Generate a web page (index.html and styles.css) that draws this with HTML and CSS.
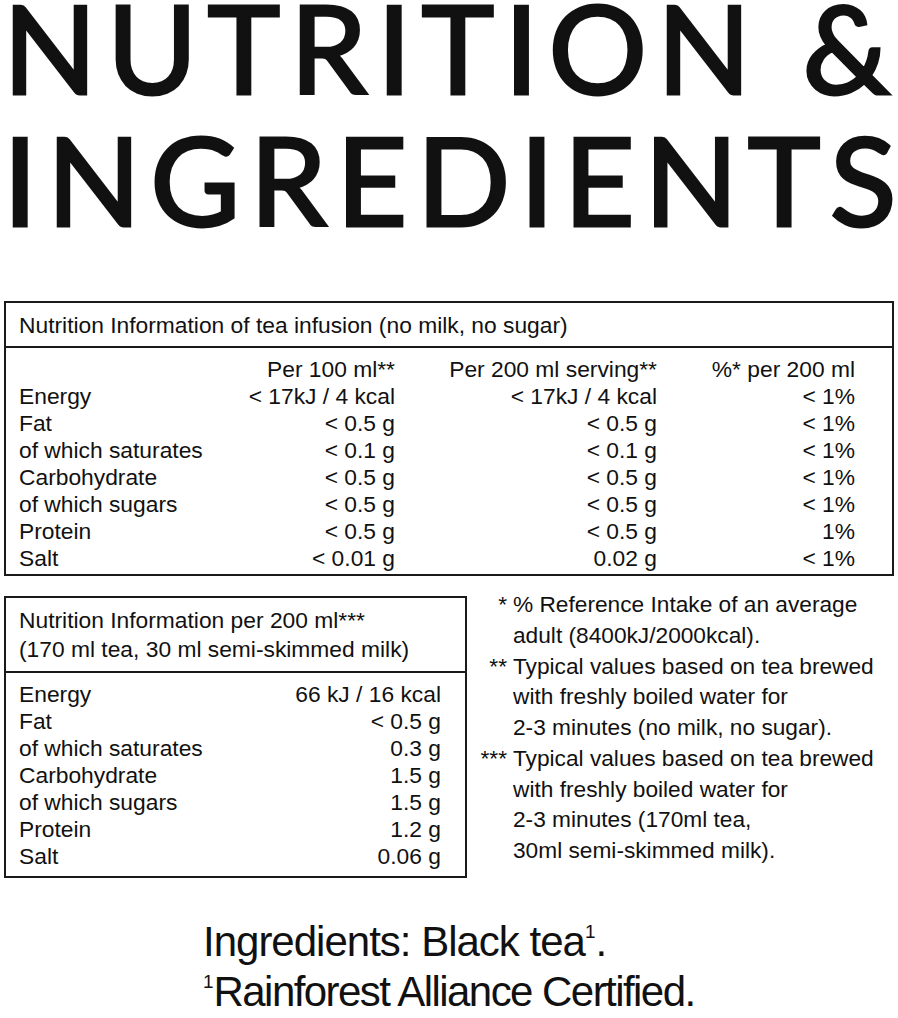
FILE: index.html
```html
<!DOCTYPE html>
<html>
<head>
  <meta charset="utf-8">
  <title>Nutrition &amp; Ingredients</title>
  <link rel="stylesheet" href="styles.css">
</head>
<body>
<div class="page">
  <h1 class="page-title">
    <span class="title-line">NUTRITION <span class="last">&amp;</span></span>
    <span class="title-line title-line-2">INGREDIENT<span class="last">S</span></span>
  </h1>

  <!-- tea on its own -->
  <div class="panel panel-wide">
    <div class="panel-head">Nutrition Information of tea infusion (no milk, no sugar)</div>
    <div class="panel-body grid-4">
      <div></div><div class="num">Per 100 ml**</div><div class="num">Per 200 ml serving**</div><div class="num">%* per 200 ml</div>
      <div>Energy</div><div class="num">&lt; 17kJ / 4 kcal</div><div class="num">&lt; 17kJ / 4 kcal</div><div class="num">&lt; 1%</div>
      <div>Fat</div><div class="num">&lt; 0.5 g</div><div class="num">&lt; 0.5 g</div><div class="num">&lt; 1%</div>
      <div>of which saturates</div><div class="num">&lt; 0.1 g</div><div class="num">&lt; 0.1 g</div><div class="num">&lt; 1%</div>
      <div>Carbohydrate</div><div class="num">&lt; 0.5 g</div><div class="num">&lt; 0.5 g</div><div class="num">&lt; 1%</div>
      <div>of which sugars</div><div class="num">&lt; 0.5 g</div><div class="num">&lt; 0.5 g</div><div class="num">&lt; 1%</div>
      <div>Protein</div><div class="num">&lt; 0.5 g</div><div class="num">&lt; 0.5 g</div><div class="num">1%</div>
      <div>Salt</div><div class="num">&lt; 0.01 g</div><div class="num">0.02 g</div><div class="num">&lt; 1%</div>
    </div>
  </div>

  <div class="lower">
    <!-- with milk -->
    <div class="panel panel-narrow">
      <div class="panel-head panel-head-tall">Nutrition Information per 200 ml***<br>(170 ml tea, 30 ml semi-skimmed milk)</div>
      <div class="panel-body grid-2">
        <div>Energy</div><div class="num">66 kJ / 16 kcal</div>
        <div>Fat</div><div class="num">&lt; 0.5 g</div>
        <div>of which saturates</div><div class="num">0.3 g</div>
        <div>Carbohydrate</div><div class="num">1.5 g</div>
        <div>of which sugars</div><div class="num">1.5 g</div>
        <div>Protein</div><div class="num">1.2 g</div>
        <div>Salt</div><div class="num">0.06 g</div>
      </div>
    </div>

    <div class="notes">
      <div class="mark">*</div>
      <div>% Reference Intake of an average<br>adult (8400kJ/2000kcal).</div>
      <div class="mark">**</div>
      <div>Typical values based on tea brewed<br>with freshly boiled water for<br>2-3 minutes (no milk, no sugar).</div>
      <div class="mark">***</div>
      <div>Typical values based on tea brewed<br>with freshly boiled water for<br>2-3 minutes (170ml tea,<br>30ml semi-skimmed milk).</div>
    </div>
  </div>

  <div class="ingredients">
    <div class="ingr-line">Ingredients: Black tea<sup>1</sup>.</div>
    <div class="ingr-line ingr-line-2"><sup>1</sup>Rainforest Alliance Certified.</div>
  </div>
</div>
</body>
</html>
```

FILE: styles.css
```css
html {
  overflow: hidden;
}

body {
  margin: 0;
  background: #ffffff;
  color: #111111;
  font-family: 'Liberation Sans', Arial, sans-serif;
}

.page {
  padding: 0 4px;
}

.page-title {
  margin: -19px 0 0 -1px;
  font-family: 'Lato', sans-serif;
  font-weight: 400;
  font-size: 123px;
  line-height: 132px;
  -webkit-text-stroke: 3px #111111;
  white-space: nowrap;
}

.title-line {
  display: block;
  letter-spacing: 10px;
}

.title-line-2 {
  letter-spacing: 9.5px;
}

.title-line .last {
  letter-spacing: 0;
}

.panel {
  border: 2px solid #1a1a1a;
  font-size: 22.8px;
  line-height: 27px;
  white-space: nowrap;
}

.panel-wide {
  margin-top: 56px;
}

.panel-head {
  padding: 9px 13px 7px;
  border-bottom: 2px solid #1a1a1a;
}

.panel-head-tall {
  line-height: 29px;
  padding: 7.5px 13px 7.5px;
}

.panel-body {
  display: grid;
}

.grid-4 {
  grid-template-columns: 1fr 176px 262px 198px;
  padding: 8px 37px 2px 13px;
}

.grid-2 {
  grid-template-columns: 1fr auto;
  padding: 7.5px 24px 6.5px 13px;
}

.num {
  text-align: right;
}

.lower {
  display: flex;
  align-items: flex-start;
  margin-top: 20px;
}

.panel-narrow {
  width: 459px;
}

.notes {
  display: grid;
  grid-template-columns: 40px 1fr;
  column-gap: 6px;
  margin-top: -7px;
  font-size: 22.7px;
  line-height: 30.75px;
  white-space: nowrap;
}

.notes .mark {
  text-align: right;
}

.ingredients {
  margin-top: 39px;
  padding-left: 199px;
  font-size: 42px;
  line-height: 50px;
  white-space: nowrap;
}

.ingr-line {
  letter-spacing: -1px;
}

.ingr-line-2 {
  letter-spacing: -1.55px;
}

.ingredients sup {
  font-size: 0.45em;
  line-height: 0;
  vertical-align: 0.95em;
  letter-spacing: 0;
}
```
